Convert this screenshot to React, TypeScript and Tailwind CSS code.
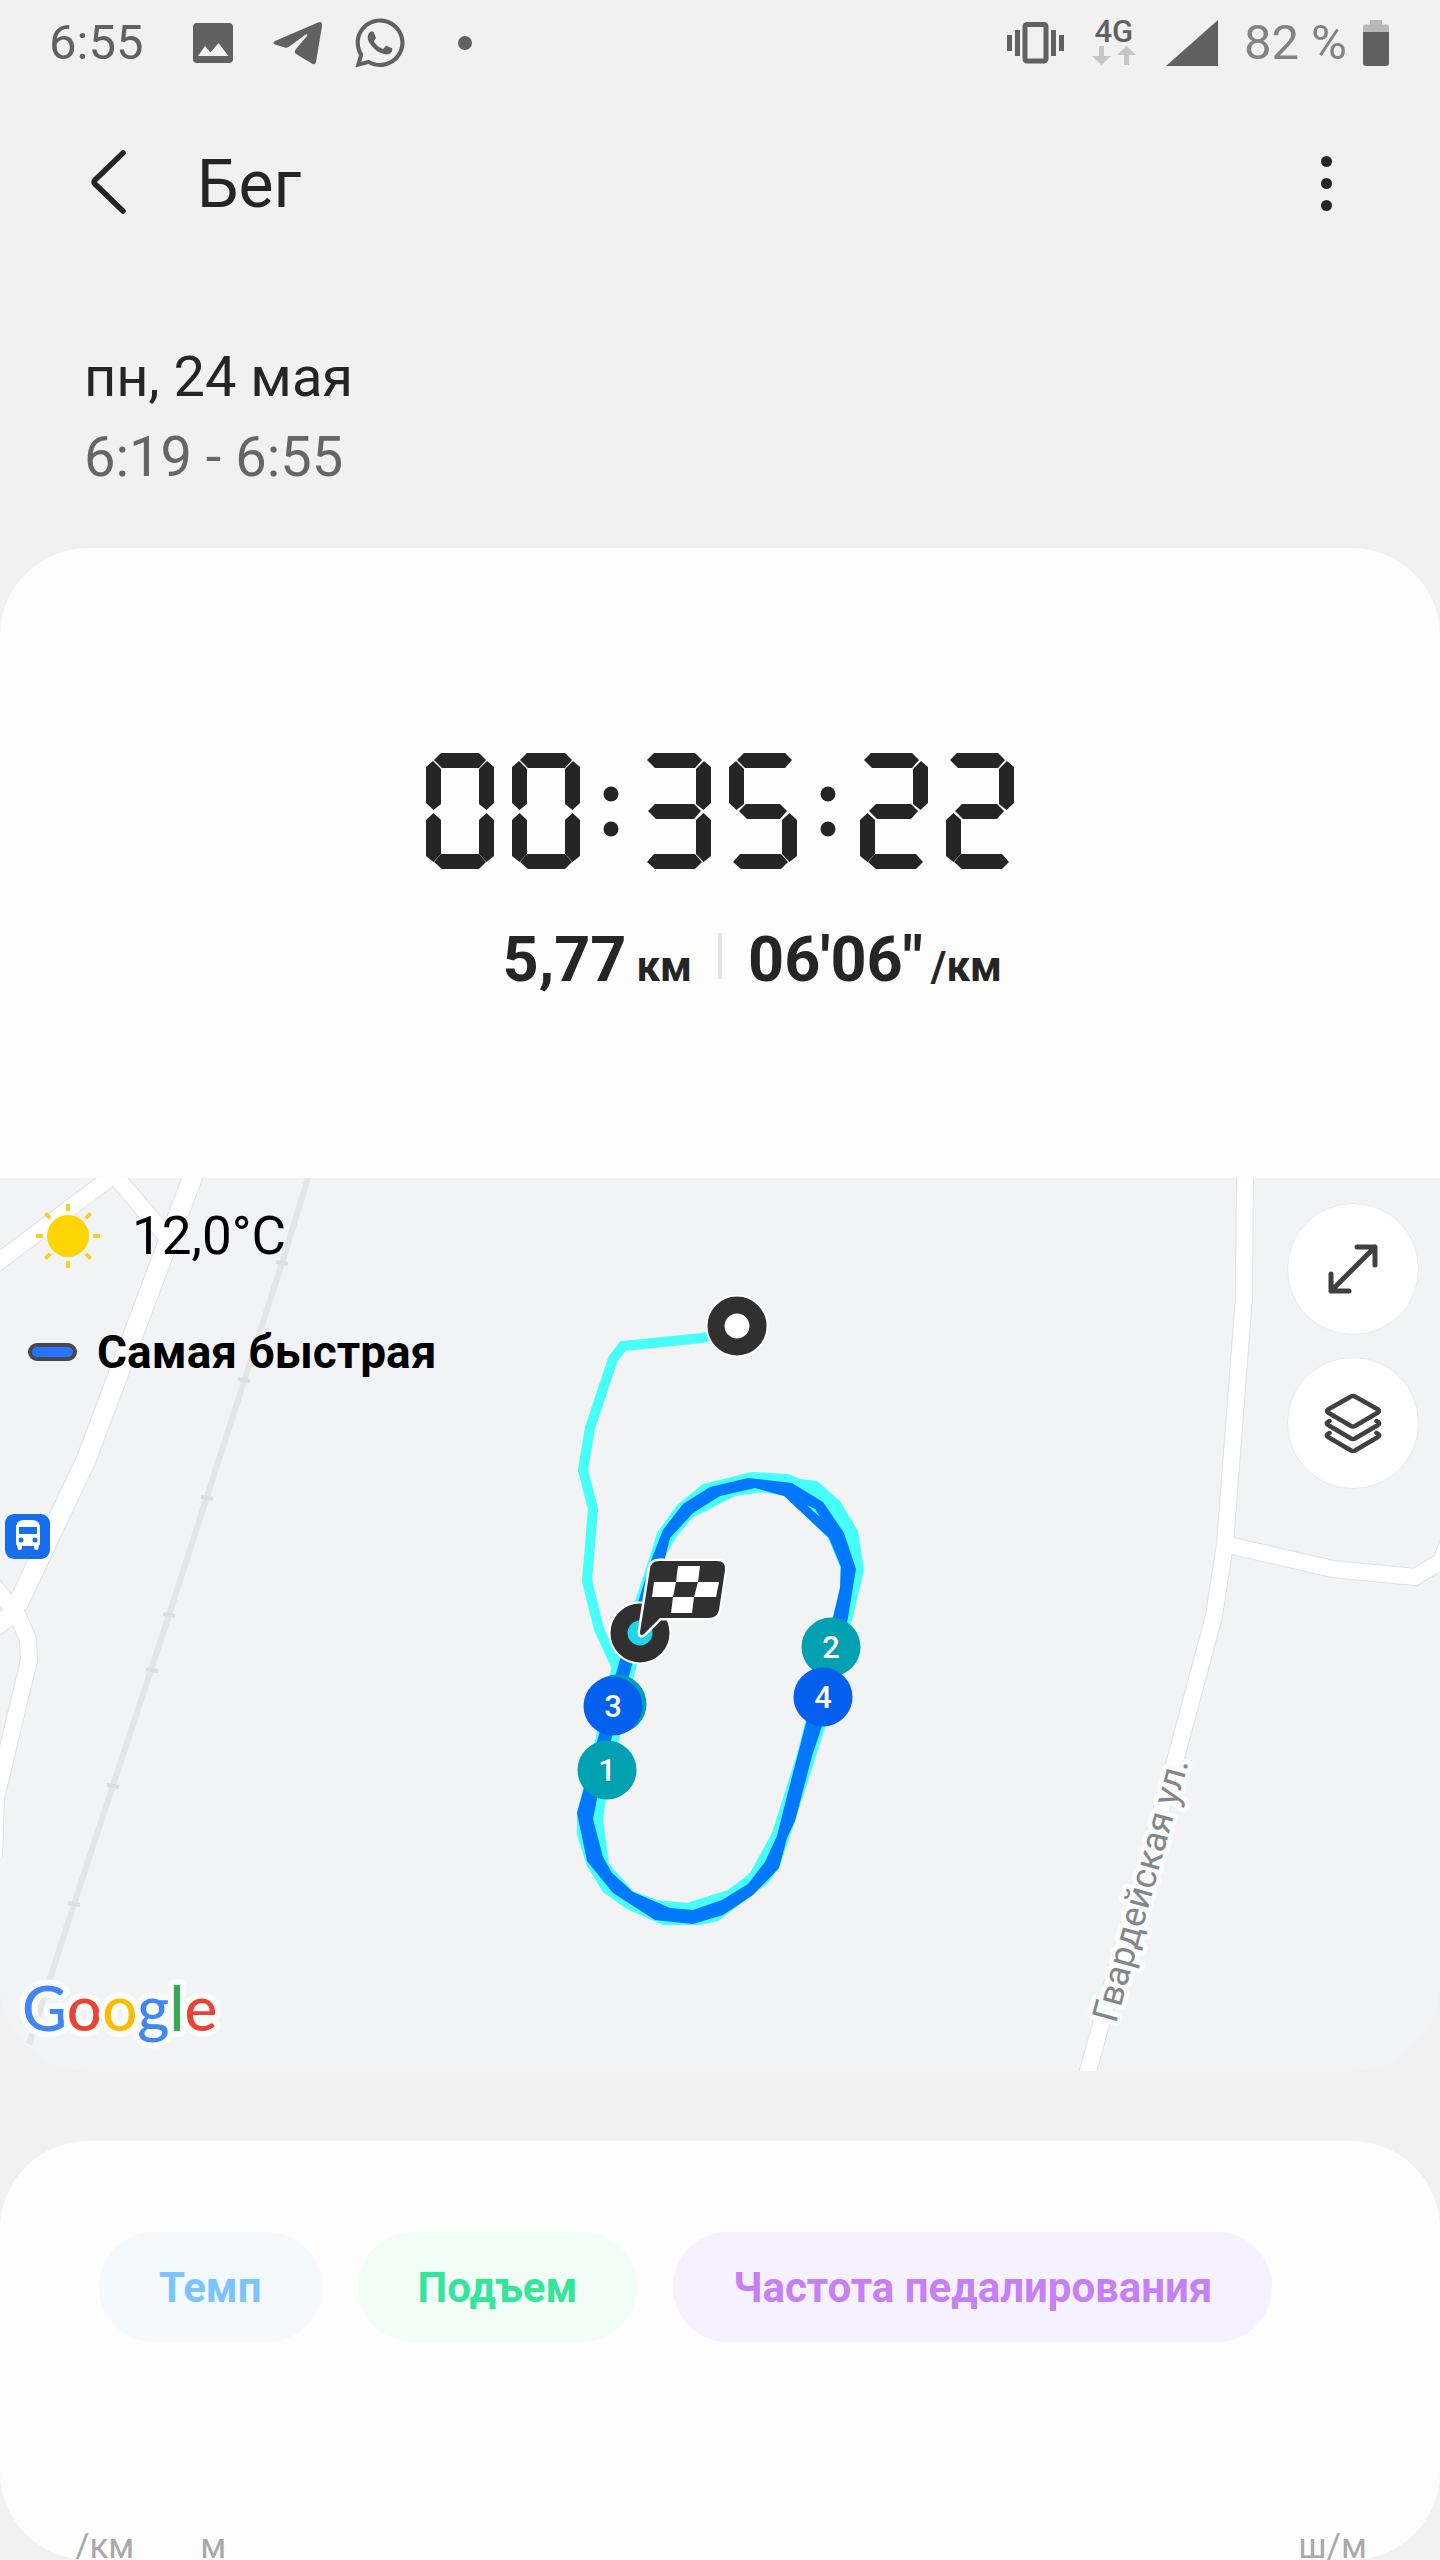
import type { ReactNode } from "react"
import { FaWhatsapp } from "react-icons/fa"

/* ---------- Status bar ---------- */

function StatusBar() {
  return (
    <div className="flex h-[86px] items-center justify-between pl-[49px] pr-[51px] text-[#616161]">
      <div className="flex items-center">
        <span className="text-[49px] leading-[50px]">6:55</span>
        <svg className="ml-[50px] h-10 w-10" viewBox="0 0 40 40" aria-hidden="true">
          <rect width="40" height="40" rx="4" fill="currentColor" />
          <path d="M5 33 L12 23 L17.500 29.500 L25.500 20 L35.500 33 Z" fill="#f1f1f1" />
        </svg>
        <svg className="ml-10 h-11 w-[49px]" viewBox="0 0 49 44" aria-hidden="true">
          <path
            d="M45 1.500 Q49.500 -0.500 49 5 L43 41 Q42 45 38 42 L23 33 Q20.500 31 23 28 L34 15 Q35 12 32 14 L17 25 Q14 28 10 26 L2 23.500 Q-1 22 2 20 Z"
            fill="currentColor"
          />
        </svg>
        <FaWhatsapp className="ml-[30px] h-14 w-14" aria-hidden="true" />
        <span className="ml-[50px] h-3.5 w-3.5 rounded-full bg-[#616161]" />
      </div>

      <div className="flex items-center">
        <svg className="h-[42px] w-[57px]" viewBox="0 0 57 42" fill="currentColor" aria-hidden="true">
          <rect x="0" y="13" width="5" height="16" />
          <rect x="8" y="8" width="5" height="26" />
          <rect x="18" y="2.500" width="21" height="36.500" rx="2" fill="none" stroke="currentColor" strokeWidth="5" />
          <rect x="44" y="8" width="5" height="26" />
          <rect x="52" y="13" width="5" height="16" />
        </svg>
        <div className="ml-7 flex h-[50px] w-11 flex-col items-center">
          <span className="text-[31px] leading-7 font-medium">4G</span>
          <svg className="h-5 w-11" viewBox="0 0 44 20" fill="#c6c6c6" aria-hidden="true">
            <path d="M7 0 h5 v10 h7 L9.500 19 L0 10 h7 Z" />
            <path d="M32 19 h5 v-10 h7 L34.500 0 L25 9 h7 Z" />
          </svg>
        </div>
        <svg className="ml-[30px] h-[46px] w-[52px]" viewBox="0 0 52 46" aria-hidden="true">
          <path d="M52 0 V46 H0 Z" fill="currentColor" />
        </svg>
        <span className="ml-[26px] text-[49px] leading-[50px] text-[#838383]">82 %</span>
        <svg className="ml-4 h-[46px] w-[26px]" viewBox="0 0 26 46" aria-hidden="true">
          <path d="M7 0 H19 V4.500 H24 Q26 4.500 26 7 V14 H0 V7 Q0 4.500 2 4.500 H7 Z" fill="#b7b7b7" />
          <path d="M0 12 H26 V43 Q26 46 23 46 H3 Q0 46 0 43 Z" fill="currentColor" />
        </svg>
      </div>
    </div>
  )
}

/* ---------- Seven segment clock ---------- */

type Digit = { h: [number, number, "top" | "mid" | "bottom"][]; v: ("tl" | "tr" | "bl" | "br")[] }

const DIGITS: Record<string, Digit> = {
  "0": { h: [[8, 60, "top"], [8, 60, "bottom"]], v: ["tl", "tr", "bl", "br"] },
  "2": { h: [[4, 59, "top"], [9, 58, "mid"], [8, 63, "bottom"]], v: ["tr", "bl"] },
  "3": { h: [[4, 59, "top"], [5, 58, "mid"], [4, 59, "bottom"]], v: ["tr", "br"] },
  "5": { h: [[8, 63, "top"], [10, 58, "mid"], [4, 59, "bottom"]], v: ["tl", "br"] },
}

const H_ROWS = {
  top: { y: 0, tip: 7 },
  mid: { y: 51, tip: 58 },
  bottom: { y: 101, tip: 109 },
}

const V_SEGMENTS = {
  tl: "0,14 7,8 15,16 15,51 7.500,57 0,50",
  tr: "68,14 61,8 53,16 53,51 60.500,57 68,50",
  bl: "0,67 7.500,60 15,67 15,101 7.500,109 0,103",
  br: "68,67 60.500,60 53,67 53,101 60.500,109 68,103",
}

function hSegment(x1: number, x2: number, row: "top" | "mid" | "bottom") {
  const { y, tip } = H_ROWS[row]
  return `${x1},${tip} ${x1 + 7},${y} ${x2 - 7},${y} ${x2},${tip} ${x2 - 7},${y + 15} ${x1 + 8},${y + 15}`
}

const CLOCK: [string, number][] = [
  ["0", 0],
  ["0", 86],
  ["3", 217],
  ["5", 303],
  ["2", 434],
  ["2", 520],
]

function Clock() {
  return (
    <svg className="h-[116px] w-[588px]" viewBox="0 0 588 116" fill="#252525" role="img" aria-label="00:35:22">
      {CLOCK.map(([char, x]) => (
        <g key={x} transform={`translate(${x} 0)`}>
          {DIGITS[char].h.map(([x1, x2, row]) => (
            <polygon key={row} points={hSegment(x1, x2, row)} />
          ))}
          {DIGITS[char].v.map((name) => (
            <polygon key={name} points={V_SEGMENTS[name]} />
          ))}
        </g>
      ))}
      {[185, 402].map((x) => (
        <g key={x}>
          <circle cx={x} cy="41" r="7.500" />
          <circle cx={x} cy="76" r="7.500" />
        </g>
      ))}
    </svg>
  )
}

/* ---------- Map ---------- */

const ROADS = [
  { d: "M-15 94 L118 -6", w: 16 },
  { d: "M112 -6 L166 58", w: 16 },
  { d: "M196 -10 L86 282 L17 428", w: 19 },
  { d: "M-8 406 L17 436 L28 461 L29 482 L-4 620 L-6 680", w: 16 },
  { d: "M-14 456 L20 430", w: 18 },
  { d: "M1245 -6 L1244 119 L1225 366 L1214 438 L1175 583 L1086 900", w: 16 },
  { d: "M1228 367 L1333 391 L1415 399 L1450 378", w: 16 },
  { d: "M1440 386 L1450 360", w: 16 },
]

const STATIONS = [
  [282, 85],
  [244, 202],
  [207, 320],
  [169, 437],
  [152, 492],
  [113, 608],
  [74, 726],
]

const KM_MARKS = [
  { n: "", x: 617, y: 526, fill: "#01a1b2" },
  { n: "3", x: 613, y: 528, fill: "#0560ef" },
  { n: "1", x: 607, y: 592, fill: "#01a1b2" },
  { n: "2", x: 831, y: 469, fill: "#01a1b2" },
  { n: "4", x: 823, y: 519, fill: "#0560ef" },
]

function MapCanvas() {
  return (
    <svg
      className="absolute inset-0 h-full w-full"
      viewBox="0 0 1440 893"
      preserveAspectRatio="xMidYMid slice"
      role="img"
      aria-label="Маршрут пробежки"
    >
      {/* дороги */}
      <g fill="none" stroke="#dfe1e2">
        {ROADS.map((r) => (
          <path key={r.d} d={r.d} strokeWidth={r.w + 2} />
        ))}
      </g>
      <g fill="none" stroke="#ffffff">
        {ROADS.map((r) => (
          <path key={r.d} d={r.d} strokeWidth={r.w} />
        ))}
      </g>

      {/* железная дорога */}
      <path d="M308 0 L282 85 L169 437 L74 726 L29 866" fill="none" stroke="#e4e5e6" strokeWidth="6" />
      <g stroke="#dcddde" strokeWidth="4">
        {STATIONS.map(([x, y]) => (
          <path key={y} d={`M${x - 6} ${y - 1} L${x + 6} ${y + 1}`} />
        ))}
      </g>

      {/* остановка */}
      <rect x="5" y="336" width="45" height="45" rx="9" fill="#176eea" />
      <path
        d="M16 350 Q16 342 24 342 H32 Q40 342 40 350 V364 Q40 367 38.500 368 V370 Q38.500 372 36.500 372 Q34 372 34 370 V368 H22 V370 Q22 372 19.500 372 Q17.500 372 17.500 370 V368 Q16 367 16 364 Z"
        fill="#ffffff"
      />
      <rect x="19" y="349" width="18" height="7" fill="#176eea" />
      <circle cx="21" cy="362" r="2.500" fill="#176eea" />
      <circle cx="35" cy="362" r="2.500" fill="#176eea" />

      <text
        transform="translate(1116 846) rotate(-74.500)"
        fontSize="36"
        fill="#848687"
        stroke="#fafbfb"
        strokeWidth="10"
        strokeLinejoin="round"
        paintOrder="stroke"
      >
        Гвардейская ул.
      </text>

      {/* трек */}
      <path
        d="M710 158 L702 160 L623 168 L613 181 L590 250 L583 292 L593 331 L587 403 L599 451 L618 492"
        fill="none"
        stroke="#46fff9"
        strokeWidth="10"
      />
      <path
        fillRule="evenodd"
        fill="#46fff9"
        d="M639 411 L648 384 L657 355 L677 327 L703 306 L752 294 L788 296 L800 301 L817 303 L840 323 L858 353 L864 392 L852 442 L825 550 L795 643 L779 690 L768 705 L718 743 L700 747 L663 747 L627 731 L603 714 L587 688 L577 657 L577 635 L595 563 L612 487 Z
           M637 487 L664 380 L677 358 L692 340 L735 318 L762 314 L785 318 L828 360 L840 389 L840 409 L833 438 L805 545 L797 576 L772 655 L750 695 L728 712 L687 725 L657 722 L633 713 L609 686 L603 641 L606 621 L631 509 Z"
      />
      <path
        fillRule="evenodd"
        fill="#0177fe"
        d="M639 421 L652 380 L663 352 L683 326 L710 309 L748 300 L792 305 L823 324 L844 355 L856 391 L847 445 L822 548 L812 578 L795 643 L787 660 L779 690 L753 717 L723 737 L693 746 L655 742 L613 715 L587 683 L577 635 L619 485 Z
           M632 487 L655 420 L670 360 L693 335 L720 318 L755 310 L784 318 L829 360 L841 389 L840 410 L833 440 L806 545 L785 626 L777 658 L765 684 L748 706 L722 722 L693 732 L670 730 L633 714 L612 695 L603 679 L593 641 L597 621 L613 554 Z"
      />
      <path d="M807 327 L815 331 L820 339 L813 333 Z" fill="#46fff9" />

      {KM_MARKS.map((m) => (
        <g key={`${m.n}-${m.x}`}>
          <circle cx={m.x} cy={m.y} r="29.500" fill={m.fill} />
          <text x={m.x} y={m.y + 11} fontSize="31" fontWeight="500" fill="#ffffff" textAnchor="middle">
            {m.n}
          </text>
        </g>
      ))}

      {/* старт и финиш */}
      <circle cx="737" cy="148" r="21" fill="#ffffff" stroke="#ffffff" strokeWidth="21" />
      <circle cx="737" cy="148" r="21" fill="none" stroke="#303030" strokeWidth="17" />
      <circle cx="640" cy="455" r="21" fill="#20d5e5" stroke="#ffffff" strokeWidth="21" />
      <circle cx="640" cy="455" r="21" fill="#20d5e5" stroke="#303030" strokeWidth="17" />
      <path
        d="M650 391 Q651 383 659 383 H717 Q726 383 725 392 L719 432 Q717 440 709 440 H660 L644 456 Q640 459 640 454 Z"
        fill="#303030"
        stroke="#ffffff"
        strokeWidth="5"
        strokeLinejoin="round"
        paintOrder="stroke"
      />
      <g fill="#ffffff">
        <path d="M678 388 H700 L698 404 H676 Z" />
        <path d="M654 404 H676 L673 419 H652 Z" />
        <path d="M698 404 H719 L716 419 H694 Z" />
        <path d="M673 419 H694 L692 435 H671 Z" />
      </g>
    </svg>
  )
}

function SunIcon() {
  return (
    <svg className="h-16 w-16" viewBox="0 0 64 64" aria-hidden="true">
      <circle cx="32" cy="32" r="21" fill="#fed500" />
      <g stroke="#efd030" strokeWidth="4">
        {[0, 45, 90, 135, 180, 225, 270, 315].map((angle) => (
          <path key={angle} d="M32 0 V7" transform={`rotate(${angle} 32 32)`} />
        ))}
      </g>
    </svg>
  )
}

function RoundButton({ label, children }: { label: string; children: ReactNode }) {
  return (
    <button
      type="button"
      aria-label={label}
      className="flex h-[132px] w-[132px] items-center justify-center rounded-full border border-[#e8e9ea] bg-white text-[#404040]"
    >
      {children}
    </button>
  )
}

function RouteMap() {
  return (
    <section className="relative h-[893px] overflow-hidden rounded-b-[88px] bg-[#f1f3f5]">
      <MapCanvas />

      <div className="absolute top-[26px] left-9 flex items-center gap-8 text-black">
        <SunIcon />
        <span className="text-[53px] leading-[60px]">12,0°C</span>
      </div>
      <div className="absolute top-[146px] left-7 flex items-center gap-5 text-black">
        <span className="h-[18px] w-[49px] rounded-full border-4 border-[#45484e] bg-[#2673ff]" />
        <span className="text-[46px] leading-[56px] font-bold">Самая быстрая</span>
      </div>

      <div className="absolute top-[25px] right-[21px] flex flex-col gap-[22px]">
        <RoundButton label="Развернуть карту">
          <svg className="h-[52px] w-[52px]" viewBox="0 0 52 52" fill="none" stroke="currentColor" strokeWidth="5" strokeLinecap="round" strokeLinejoin="round" aria-hidden="true">
            <path d="M4 48 L48 4 M30 4 H46 Q48 4 48 6 V22 M4 31 V46 Q4 48 6 48 H22" />
          </svg>
        </RoundButton>
        <RoundButton label="Слои карты">
          <svg className="h-[60px] w-[58px]" viewBox="0 0 58 60" fill="none" stroke="currentColor" strokeWidth="4.500" strokeLinecap="round" strokeLinejoin="round" aria-hidden="true">
            <path d="M27 3.500 Q29 2.500 31 3.500 L54 16.500 Q56 18 54 19.500 L31 33 Q29 34 27 33 L4 19.500 Q2 18 4 16.500 Z" />
            <path d="M5.500 28 Q1 30 4 32 L27 45.500 Q29 46.500 31 45.500 L54 32 Q57 30 52.500 28" />
            <path d="M5.500 40 Q1 42 4 44 L27 57.500 Q29 58.500 31 57.500 L54 44 Q57 42 52.500 40" />
          </svg>
        </RoundButton>
      </div>

      <svg className="absolute bottom-[18px] left-3 h-[84px] w-[220px]" viewBox="0 0 220 84" role="img" aria-label="Google">
        <text
          x="10"
          y="62"
          fontSize="62"
          className="font-[Lato,sans-serif] font-medium"
          stroke="#fafbfb"
          strokeWidth="12"
          strokeLinejoin="round"
          paintOrder="stroke"
        >
          <tspan fill="#4285f4">G</tspan>
          <tspan fill="#ea4335">o</tspan>
          <tspan fill="#fbbc05">o</tspan>
          <tspan fill="#4285f4">g</tspan>
          <tspan fill="#34a853">l</tspan>
          <tspan fill="#ea4335">e</tspan>
        </text>
      </svg>
    </section>
  )
}

/* ---------- Page ---------- */

export default function App() {
  return (
    <main className="bg-[#f1f1f1] font-[Roboto,'Liberation_Sans',sans-serif] text-[#252525]">
      <StatusBar />

      <header className="flex h-[194px] items-center justify-between pr-[104px] pl-[88px]">
        <div className="flex items-center gap-[69px]">
          <button type="button" aria-label="Назад">
            <svg className="h-[68px] w-10" viewBox="0 0 40 68" fill="none" stroke="currentColor" strokeWidth="5.500" strokeLinecap="round" strokeLinejoin="round" aria-hidden="true">
              <path d="M35 4 L7 31 Q5 33 7 35 L35 62" />
            </svg>
          </button>
          <h1 className="pt-1 text-[66px] leading-20">Бег</h1>
        </div>
        <button type="button" aria-label="Ещё" className="flex flex-col items-center gap-[11px] px-1">
          <span className="h-[11px] w-[11px] rounded-full bg-[#252525]" />
          <span className="h-[11px] w-[11px] rounded-full bg-[#252525]" />
          <span className="h-[11px] w-[11px] rounded-full bg-[#252525]" />
        </button>
      </header>

      <div className="px-[84px] pt-[57px] pb-[51px] text-[56px] leading-20">
        <p>пн, 24 мая</p>
        <p className="text-[#666666]">6:19 - 6:55</p>
      </div>

      <section className="flex h-[630px] flex-col items-center rounded-t-[88px] bg-[#fdfdfd] pt-[205px]">
        <Clock />
        <div className="mt-[59px] grid w-full grid-cols-[1fr_4px_1fr] gap-[26px] font-bold">
          <p className="flex items-baseline justify-end gap-2.5">
            <span className="text-[63px] leading-16">5,77</span>
            <span className="text-[42px] leading-12">км</span>
          </p>
          <span className="mt-[5px] h-[46px] bg-[#e4e4e4]" />
          <p className="flex items-baseline gap-2">
            <span className="text-[63px] leading-16">06'06"</span>
            <span className="text-[42px] leading-12">/км</span>
          </p>
        </div>
      </section>

      <RouteMap />

      <section className="mt-[70px] flex h-[419px] flex-col justify-between overflow-hidden rounded-[88px] bg-[#fdfdfd] pt-[91px]">
        <div className="flex gap-9 px-[99px] text-[42px] font-bold">
          <button type="button" className="h-[110px] rounded-full bg-[#f4f9fd] px-[60px] text-[#7cc4ff]">
            Темп
          </button>
          <button type="button" className="h-[110px] rounded-full bg-[#f2fdf8] px-[60px] text-[#35e59b]">
            Подъем
          </button>
          <button type="button" className="h-[110px] rounded-full bg-[#f5f1fe] px-[60px] text-[#c580f4]">
            Частота педалирования
          </button>
        </div>
        <div className="flex justify-between pr-[73px] pl-[75px] text-[35px] leading-[26px] text-[#a9a9a9]">
          <div className="flex gap-[66px]">
            <span>/км</span>
            <span>м</span>
          </div>
          <span>ш/м</span>
        </div>
      </section>
    </main>
  )
}
